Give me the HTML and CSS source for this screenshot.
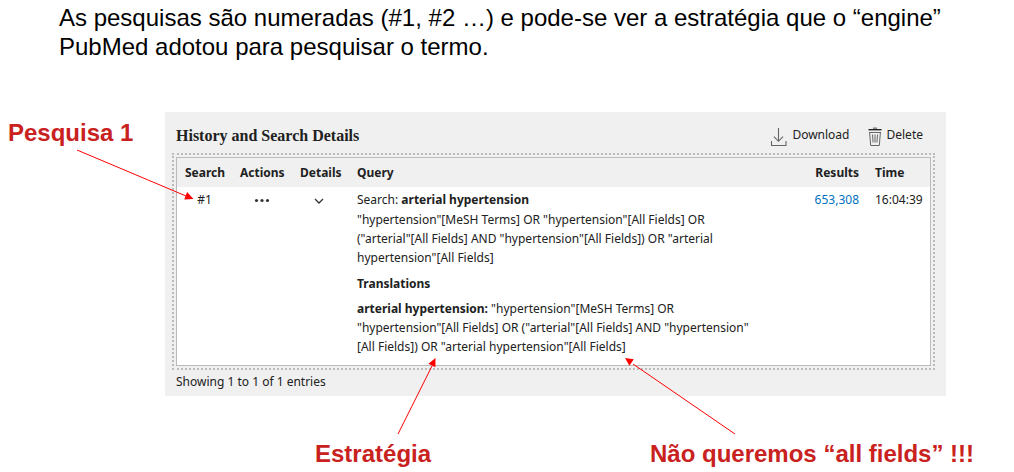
FILE: index.html
```html
<!DOCTYPE html>
<html lang="pt">
<head>
<meta charset="utf-8">
<title>PubMed: estratégia de pesquisa</title>
<link rel="stylesheet" href="styles.css">
</head>
<body>
<main class="slide">
  <p class="intro">As pesquisas são numeradas (#1, #2 …) e pode-se ver a estratégia que o “engine”<br>PubMed adotou para pesquisar o termo.</p>
  <div class="stage">
    <p class="note note-search">Pesquisa 1</p>
    <section class="panel" aria-labelledby="history-title">
      <header class="panel-head">
        <h1 class="panel-title" id="history-title">History and Search Details</h1>
        <div class="tools">
          <button class="tool" type="button">
            <svg class="tool-icon" width="18" height="20" viewBox="0 0 18 20" fill="none" stroke="#666" stroke-width="1.1"><path d="M9.500 1v13M5 9.600l4.500 4.700 4.500-4.700M2.500 14v4.500h14.500v-4.500"/></svg>
            <span>Download</span>
          </button>
          <button class="tool" type="button">
            <svg class="tool-icon" width="14" height="20" viewBox="0 0 14 20" fill="none" stroke="#666" stroke-width="1"><path d="M5 1.200h4" stroke="#888" stroke-width="1.600"/><path d="M.5 2.700h13" stroke="#222" stroke-width="1.400"/><path d="M1 5.500h12M1.600 5.500l1.100 13h8.600l1.100-13M4.500 7.500l.6 8M7 7.500v8M9.500 7.500l-.6 8"/></svg>
            <span>Delete</span>
          </button>
        </div>
      </header>
      <div class="frame">
        <table class="history">
          <thead>
            <tr>
              <th class="col-search" scope="col">Search</th>
              <th class="col-actions" scope="col">Actions</th>
              <th class="col-details" scope="col">Details</th>
              <th class="col-query" scope="col">Query</th>
              <th class="col-results" scope="col">Results</th>
              <th class="col-time" scope="col">Time</th>
            </tr>
          </thead>
          <tbody>
            <tr>
              <td class="center">#1</td>
              <td class="center"><button class="icon-button" type="button" aria-label="Actions"><svg width="18" height="6" viewBox="0 0 18 6" fill="#333"><circle cx="3.500" cy="2.500" r="1.600"/><circle cx="9" cy="2.500" r="1.600"/><circle cx="14.500" cy="2.500" r="1.600"/></svg></button></td>
              <td class="center"><button class="icon-button" type="button" aria-label="Details"><svg width="14" height="6" viewBox="0 0 14 6" fill="none" stroke="#333" stroke-width="1.300"><path d="M1 1l4 4 4-4"/></svg></button></td>
              <td class="query">
                <p class="term">Search: <b>arterial hypertension</b></p>
                <p class="text">"hypertension"[MeSH Terms] OR "hypertension"[All Fields] OR<br>("arterial"[All Fields] AND "hypertension"[All Fields]) OR "arterial<br>hypertension"[All Fields]</p>
                <h2 class="subtitle">Translations</h2>
                <p class="text"><b>arterial hypertension:</b> "hypertension"[MeSH Terms] OR<br>"hypertension"[All Fields] OR ("arterial"[All Fields] AND "hypertension"<br>[All Fields]) OR "arterial hypertension"[All Fields]</p>
              </td>
              <td class="col-results"><a class="count" href="#">653,308</a></td>
              <td>16:04:39</td>
            </tr>
          </tbody>
        </table>
      </div>
      <p class="entries">Showing 1 to 1 of 1 entries</p>
    </section>
  </div>
  <div class="notes">
    <p class="note">Estratégia</p>
    <p class="note">Não queremos “all fields” !!!</p>
  </div>
  <svg class="arrows" width="1014" height="472" viewBox="0 0 1014 472" fill="#f00" stroke="#f00" stroke-width="1" aria-hidden="true">
    <path d="M77 150L186 196M398 434L432 366M735 434L633 364"/>
    <path stroke="none" d="M193.500 199l-9.300 .4 2.900-7.400zM435.500 358l-.1 9.200-7-3.500zM625 358l8.800 1.200-4.400 6.600z"/>
  </svg>
</main>
</body>
</html>
```
FILE: styles.css
```css
* {
  box-sizing: border-box;
}

body {
  margin: 0;
  background: #fff;
  color: #000;
  font-family: "Liberation Sans", Arial, sans-serif;
}

p,
h1,
h2 {
  margin: 0;
}

button {
  padding: 0;
  border: 0;
  background: none;
  color: inherit;
  font: inherit;
  cursor: pointer;
}

.slide {
  position: relative;
}

.intro {
  padding: 3px 0 0 59px;
  font-size: 24px;
  line-height: 29px;
  white-space: nowrap;
}

.stage {
  display: grid;
  grid-template-columns: 157px minmax(0, 1fr);
  padding: 51px 68px 0 8px;
}

.note {
  color: #c9211e;
  font-size: 24px;
  font-weight: bold;
  line-height: 28px;
  white-space: nowrap;
}

.note-search {
  padding-top: 7px;
}

.panel {
  padding: 11px 11px 3px 7px;
  background: #f0f0f0;
  color: #212121;
  font-family: "Noto Sans", sans-serif;
  font-size: 12px;
  line-height: 19px;
}

.panel-head {
  display: flex;
  align-items: center;
  justify-content: space-between;
  height: 30px;
  padding: 0 12px 4px 4px;
}

.panel-title {
  font-family: "Liberation Serif", serif;
  font-size: 16px;
  line-height: 24px;
}

.tools {
  display: flex;
  gap: 18px;
}

.tool {
  display: flex;
  gap: 5px;
}

.tool-icon {
  margin-top: 2px;
}

.frame {
  padding: 2px;
  border: 2px dotted #bbb;
}

.history {
  width: 100%;
  border: 1px solid #bbb;
  border-spacing: 0;
  background: #fff;
  table-layout: fixed;
}

.history th {
  padding: 5px 8px;
  background: #f0f0f0;
  text-align: left;
  white-space: nowrap;
}

.history td {
  padding: 3px 8px 9px;
  vertical-align: top;
  white-space: nowrap;
}

.col-search {
  width: 55px;
}

.col-actions {
  width: 60px;
}

.col-details {
  width: 57px;
}

.history .col-results {
  width: 68px;
  text-align: right;
}

.col-time {
  width: 63px;
}

.history .center {
  text-align: center;
}

.icon-button svg {
  display: block;
}

.icon-button {
  padding: 4px;
}

.term {
  margin-bottom: 1px;
}

.subtitle {
  margin: 7px 0 6px;
  font-size: 12px;
  line-height: 19px;
}

.count {
  color: #0071bc;
  text-decoration: none;
}

.entries {
  padding: 2px 4px;
}

.notes {
  display: grid;
  grid-template-columns: 335px 1fr;
  padding: 44px 0 4px 315px;
}

.arrows {
  position: absolute;
  top: 0;
  left: 0;
  pointer-events: none;
}
```
